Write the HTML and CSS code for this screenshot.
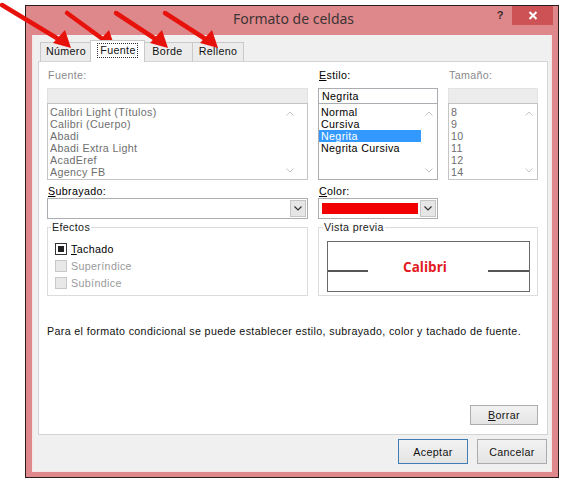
FILE: index.html
```html
<!DOCTYPE html>
<html lang="es">
<head>
<meta charset="utf-8">
<title>Formato de celdas</title>
<link rel="stylesheet" href="styles.css">
</head>
<body>
<div class="window">
  <div class="titlebar">
    <div></div>
    <div class="title">Formato de celdas</div>
    <div class="tb-buttons">
      <span class="help">?</span>
      <span class="close"><svg width="10" height="9" viewBox="0 0 10 9"><path d="M1.5 1 L8.5 8 M8.5 1 L1.5 8" stroke="#fff" stroke-width="2"/></svg></span>
    </div>
  </div>
  <div class="client">
    <div class="tabs">
      <div class="tab t-num">Número</div>
      <div class="tab active"><span class="focus">Fuente</span></div>
      <div class="tab t-borde">Borde</div>
      <div class="tab t-relleno">Relleno</div>
    </div>
    <div class="panel">
      <div class="fontgrid">
        <div class="col">
          <div class="lbl dis">Fuente:</div>
          <div class="tbox dis"></div>
          <div class="list dis">
            <ul class="items">
              <li>Calibri Light (Títulos)</li>
              <li>Calibri (Cuerpo)</li>
              <li>Abadi</li>
              <li>Abadi Extra Light</li>
              <li>AcadEref</li>
              <li>Agency FB</li>
            </ul>
            <div class="sb sb-wide">
              <svg width="8" height="5" viewBox="0 0 8 5"><path d="M0.5 4.5 L4 1 L7.5 4.5" fill="none" stroke="#c4c4c4"/></svg>
              <svg width="8" height="5" viewBox="0 0 8 5"><path d="M0.5 0.5 L4 4 L7.5 0.5" fill="none" stroke="#c4c4c4"/></svg>
            </div>
          </div>
        </div>
        <div class="col">
          <div class="lbl"><u>E</u>stilo:</div>
          <div class="tbox">Negrita</div>
          <div class="list">
            <ul class="items">
              <li>Normal</li>
              <li>Cursiva</li>
              <li class="sel">Negrita</li>
              <li>Negrita Cursiva</li>
            </ul>
            <div class="sb">
              <svg width="8" height="5" viewBox="0 0 8 5"><path d="M0.5 4.5 L4 1 L7.5 4.5" fill="none" stroke="#c4c4c4"/></svg>
              <svg width="8" height="5" viewBox="0 0 8 5"><path d="M0.5 0.5 L4 4 L7.5 0.5" fill="none" stroke="#c4c4c4"/></svg>
            </div>
          </div>
        </div>
        <div class="col">
          <div class="lbl dis">Tamaño:</div>
          <div class="tbox dis"></div>
          <div class="list dis">
            <ul class="items">
              <li>8</li>
              <li>9</li>
              <li>10</li>
              <li>11</li>
              <li>12</li>
              <li>14</li>
            </ul>
            <div class="sb">
              <svg width="8" height="5" viewBox="0 0 8 5"><path d="M0.5 4.5 L4 1 L7.5 4.5" fill="none" stroke="#c4c4c4"/></svg>
              <svg width="8" height="5" viewBox="0 0 8 5"><path d="M0.5 0.5 L4 4 L7.5 0.5" fill="none" stroke="#c4c4c4"/></svg>
            </div>
          </div>
        </div>

        <div class="col row2">
          <div class="lbl2"><u>S</u>ubrayado:</div>
          <div class="combo">
            <div class="combo-val"></div>
            <div class="combo-btn"><svg width="8" height="5" viewBox="0 0 8 5"><path d="M0.5 0.5 L4 4 L7.5 0.5" fill="none" stroke="#333" stroke-width="1.2"/></svg></div>
          </div>
        </div>
        <div class="col row2">
          <div class="lbl2"><u>C</u>olor:</div>
          <div class="combo">
            <div class="combo-val"><div class="swatch"></div></div>
            <div class="combo-btn"><svg width="8" height="5" viewBox="0 0 8 5"><path d="M0.5 0.5 L4 4 L7.5 0.5" fill="none" stroke="#333" stroke-width="1.2"/></svg></div>
          </div>
        </div>
        <div></div>

        <fieldset class="group efectos">
          <legend>Efectos</legend>
          <div class="chk"><span class="box checked"><span></span></span><span><u>T</u>achado</span></div>
          <div class="chk dis"><span class="box"></span><span>Superíndice</span></div>
          <div class="chk dis"><span class="box"></span><span>Subíndice</span></div>
        </fieldset>
        <fieldset class="group vista">
          <legend>Vista previa</legend>
          <div class="preview">
            <div class="pline pl-left"></div>
            <div class="ptext">Calibri</div>
            <div class="pline pl-right"></div>
          </div>
        </fieldset>
      </div>
      <p class="desc">Para el formato condicional se puede establecer estilo, subrayado, color y tachado de fuente.</p>
      <div class="borrar-row"><button class="btn btn-borrar"><u>B</u>orrar</button></div>
    </div>
    <div class="footer">
      <button class="btn btn-main default">Aceptar</button>
      <button class="btn btn-main">Cancelar</button>
    </div>
  </div>
</div>
<svg class="arrows" width="566" height="482" viewBox="0 0 566 482">
  <g stroke="#e8120c" stroke-width="4.5" stroke-linecap="round" fill="none">
    <path d="M2 5 L60 40"/>
    <path d="M67 13 L104 40"/>
    <path d="M116 13 L157 40"/>
    <path d="M165 13 L207 40"/>
  </g>
  <g fill="#e8120c">
    <polygon points="71,48 53,43 65,30"/>
    <polygon points="115,48 97,43 109,30"/>
    <polygon points="168,48 150,43 162,30"/>
    <polygon points="218,48 200,43 212,30"/>
  </g>
</svg>
</body>
</html>
```

FILE: styles.css
```css
* { box-sizing: border-box; }
html, body { margin: 0; padding: 0; }
body {
  width: 566px;
  height: 482px;
  overflow: hidden;
  position: relative;
  background: #fff;
  font-family: "Liberation Sans", Arial, sans-serif;
  font-size: 10.7px;
  letter-spacing: 0.35px;
  color: #000;
}
.window {
  margin: 5px 0 0 25px;
  width: 534px;
  height: 473px;
  border: 1px solid #2a1c1c;
  background: #df888c;
  display: flex;
  flex-direction: column;
  padding-bottom: 5px;
}
.titlebar {
  height: 29px;
  display: grid;
  grid-template-columns: 1fr auto 1fr;
  align-items: start;
}
.title {
  font-family: "Noto Sans", "Open Sans", sans-serif;
  font-size: 14px;
  letter-spacing: 0;
  line-height: 24px;
  color: #3c3434;
  padding-top: 1px;
  padding-left: 3px;
}
.tb-buttons {
  display: flex;
  justify-content: flex-end;
  align-items: flex-start;
  padding-right: 5px;
}
.help {
  width: 24px;
  text-align: center;
  font-weight: bold;
  font-size: 11px;
  letter-spacing: 0;
  line-height: 18px;
  color: #3a2a2a;
}
.close {
  width: 41px;
  height: 19px;
  background: #cc5256;
  display: flex;
  align-items: center;
  justify-content: center;
}
.client {
  flex: 1;
  margin: 0 6px;
  background: #f0f0f0;
  border: 1px solid #f6e6e6;
  border-top: none;
  display: flex;
  flex-direction: column;
}
.tabs {
  display: flex;
  height: 22px;
  margin: 5px 0 -1px 7px;
  align-items: flex-start;
}
.tab {
  height: 19px;
  margin-top: 2px;
  border: 1px solid #c9c9c9;
  border-bottom: none;
  background: #ececec;
  text-align: center;
  line-height: 17px;
  color: #111;
}
.t-num { width: 52px; }
.t-borde { width: 50px; border-left: none; }
.t-relleno { width: 51px; border-left: none; }
.tab.active {
  position: relative;
  z-index: 1;
  width: 55px;
  height: 22px;
  margin: 0 -2px 0 -2px;
  background: #fff;
  padding-top: 2px;
  line-height: 14px;
}
.focus {
  display: inline-block;
  border: 1px dotted #333;
  padding: 0 1px 0 2px;
  line-height: 13px;
}
.panel {
  margin-left: 5px;
  width: 510px;
  height: 374px;
  background: #fff;
  border: 1px solid #d4d4d4;
  padding: 7px 8px 9px 8px;
  display: flex;
  flex-direction: column;
}
.fontgrid {
  display: grid;
  grid-template-columns: 261px 120px 90px;
  column-gap: 10px;
}
.col { display: flex; flex-direction: column; }
.lbl {
  height: 13px;
  line-height: 13px;
  margin-bottom: 6px;
  padding-left: 1px;
}
.dis { color: #8a8a8a; }
.tbox {
  height: 16px;
  border: 1px solid #abadb3;
  padding-left: 3px;
  line-height: 14px;
  background: #fff;
}
.tbox.dis {
  background: #ececec;
  border-color: #e2e2e2;
}
.list {
  margin-top: -1px;
  height: 77px;
  border: 1px solid #abadb3;
  display: flex;
  background: #fff;
}
.list.dis { border-color: #c4c4c4; color: #6e6e6e; }
.items {
  list-style: none;
  margin: 0;
  padding: 2px 0 0 0;
  flex: 1;
}
.items li {
  height: 12px;
  line-height: 12px;
  padding-left: 2px;
  white-space: nowrap;
}
.items li.sel { background: #3399ff; color: #fff; }
.sb {
  width: 16px;
  display: flex;
  flex-direction: column;
  justify-content: space-between;
  align-items: center;
  padding: 7px 0 6px;
}
.sb-wide { width: 26px; padding-right: 9px; }
.row2 { margin-top: 5px; }
.lbl2 {
  height: 13px;
  line-height: 12px;
  padding-left: 1px;
}
.combo {
  height: 21px;
  border: 1px solid #abadb3;
  background: #fff;
  display: flex;
}
.combo-val { flex: 1; padding: 4px 2px 4px 3px; }
.swatch { height: 11px; background: #f20000; }
.combo-btn {
  width: 16px;
  margin: 1px 1px 1px 0;
  background: #e6e6e6;
  border: 1px solid #c5c5c5;
  display: flex;
  align-items: center;
  justify-content: center;
}
.group {
  margin: 2px 0 0 0;
  height: 75px;
  border: 1px solid #dcdcdc;
  padding: 0 7px 0 7px;
  min-width: 0;
}
.group legend {
  margin-left: -4px;
  padding: 0 1px;
  line-height: 12px;
  color: #222;
}
.efectos { padding-top: 7px; }
.chk {
  height: 17px;
  display: flex;
  align-items: center;
  gap: 4px;
}
.chk .box {
  width: 12px;
  height: 12px;
  border: 1px solid #333;
  background: #fff;
  display: flex;
  align-items: center;
  justify-content: center;
}
.chk .box.checked span {
  width: 6px;
  height: 6px;
  background: #222;
}
.chk.dis { color: #9a9a9a; }
.chk.dis .box { border-color: #c8c8c8; background: #e8e8e8; }
.vista {
  grid-column: 2 / span 2;
  padding: 8px 7px 0 8px;
}
.preview {
  height: 51px;
  border: 1px solid #6a6a6a;
  display: flex;
  align-items: center;
  justify-content: space-between;
}
.pline {
  height: 2px;
  background: #555;
  margin-top: 8px;
}
.pl-left { width: 40px; }
.pl-right { width: 41px; }
.ptext {
  color: #e3191f;
  font-weight: bold;
  font-size: 13.5px;
  letter-spacing: 0;
  font-family: "Open Sans", "Noto Sans", sans-serif;
  margin-left: -6px;
}
.desc {
  margin: 29px 0 0 0;
  line-height: 12px;
  white-space: nowrap;
  color: #111;
}
.borrar-row {
  margin-top: auto;
  display: flex;
  justify-content: flex-end;
  padding-right: 1px;
}
.btn {
  font-family: inherit;
  font-size: 10.7px;
  letter-spacing: 0.35px;
  color: #111;
  background: linear-gradient(#f2f2f2, #e4e4e4);
  border: 1px solid #acacac;
  padding: 0;
}
.btn-borrar { width: 68px; height: 20px; }
.footer {
  display: flex;
  justify-content: flex-end;
  gap: 9px;
  padding: 4px 4px 0 0;
}
.btn-main { width: 70px; height: 25px; }
.btn.default { border-color: #3d7fb4; }
.arrows {
  position: absolute;
  left: 0;
  top: 0;
  pointer-events: none;
}
```
